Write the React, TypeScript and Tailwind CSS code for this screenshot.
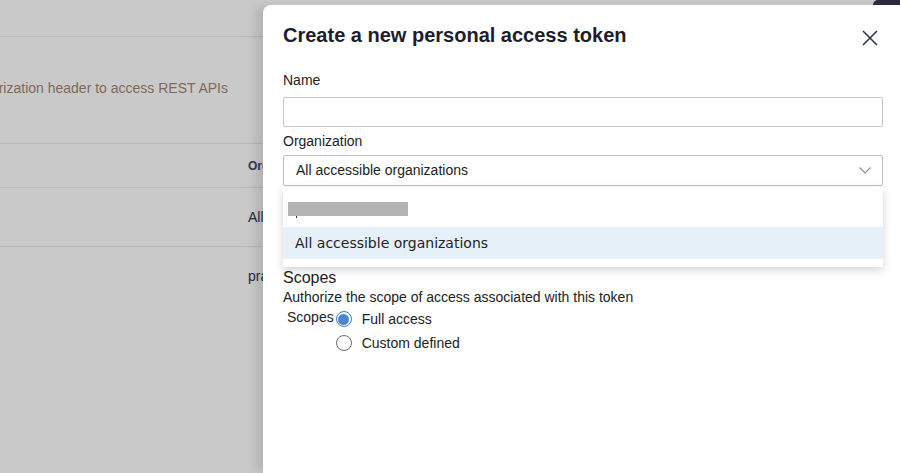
import React from "react";

function Radio({ checked }: { checked?: boolean }) {
  if (checked) {
    return (
      <span className="w-4 h-4 rounded-full border border-[#3d7dd0] bg-white flex items-center justify-center shrink-0">
        <span className="w-[11px] h-[11px] rounded-full bg-[#4a86d4]" />
      </span>
    );
  }
  return <span className="w-4 h-4 rounded-full border border-[#6b6b6b] bg-white shrink-0" />;
}

export default function App() {
  return (
    <div className="relative w-[900px] h-[473px] overflow-hidden bg-[#c9c9c9] flex font-['Liberation_Sans',Arial,sans-serif]">
      {/* page behind the overlay */}
      <div className="w-[263px] shrink-0 overflow-hidden">
        <div className="h-[37px] border-b border-[#b8b8b8]" />
        <div className="mt-[41px] w-[228px] flex justify-end overflow-hidden">
          <span className="whitespace-nowrap shrink-0 text-[14px] leading-5 text-[#80695a]">
            Use the token in the Authorization header to access REST APIs
          </span>
        </div>
        <div className="mt-[45px] border-t border-[#b8b8b8]">
          <div className="h-[44px] flex items-center pl-[248px] border-b border-[#b8b8b8]">
            <span className="whitespace-nowrap text-[12px] font-bold text-[#2b3a58]">Organization</span>
          </div>
          <div className="h-[59px] flex items-center pl-[248px] border-b border-[#b8b8b8]">
            <span className="whitespace-nowrap text-[14px] text-[#1f2940]">All accessible organizations</span>
          </div>
          <div className="h-[58px] flex items-center pl-[248px]">
            <span className="whitespace-nowrap text-[14px] text-[#1f2940]">practice</span>
          </div>
        </div>
      </div>

      {/* dark element at the top right, under the overlay */}
      <div className="absolute right-0 top-0 w-[27px] h-[5px] bg-[#2e2a3b] rounded-tl-[6px]" />

      {/* side panel */}
      <div className="flex-1 mt-[5px] bg-white rounded-tl-lg pt-[16px] pl-5 pr-[17px] shadow-[-10px_0_10px_-2px_rgba(0,0,0,0.1)]">
        <div className="flex items-start justify-between">
          <h1 className="text-[20px] leading-[28px] font-bold text-[#1d1d2b]">
            Create a new personal access token
          </h1>
          <button className="mt-[9px] mr-[5px] w-4 h-4 text-[#26334d]">
            <svg viewBox="0 0 16 16" width="16" height="16" fill="none" stroke="currentColor" strokeWidth="1.5">
              <path d="M1 1L15 15M15 1L1 15" />
            </svg>
          </button>
        </div>

        <label className="block mt-[21px] text-[14px] leading-5 text-[#222]">Name</label>
        <div className="mt-[7px] h-[30px] border border-[#c6c6c6] rounded-[2px]" />

        <label className="block mt-[4px] text-[14px] leading-5 text-[#222]">Organization</label>
        <div className="relative mt-[4px]">
          <div className="h-[31px] border border-[#c0c0c0] rounded-[2px] flex items-center justify-between pl-[12px] pr-[11px]">
            <span className="text-[14px] text-[#222]">All accessible organizations</span>
            <svg viewBox="0 0 12 7" width="12" height="7" fill="none" stroke="#8a8a8a" strokeWidth="1.1">
              <path d="M0.5 0.5L6 6L11.5 0.5" />
            </svg>
          </div>
          <div className="absolute left-0 right-0 top-full mt-px h-[80px] bg-white rounded-b-[2px] shadow-[0_3px_8px_rgba(0,0,0,0.18)] pt-[15px]">
            <div className="ml-[5px] w-[120px] h-[14px] bg-[#b4b4b4]" />
            <div className="ml-[13px] w-px h-[2px] bg-[#333]" />
            <div className="mt-[9px] h-[32px] bg-[#e6f0f9] flex items-center pl-[12px]">
              <span className="text-[14px] text-[#222] font-['DejaVu_Sans',sans-serif]">All accessible organizations</span>
            </div>
          </div>
        </div>

        <h2 className="mt-[83px] text-[16px] leading-[18px] text-[#222]">Scopes</h2>
        <p className="text-[14px] leading-5 text-[#222]">Authorize the scope of access associated with this token</p>
        <div className="flex items-start">
          <span className="ml-[4px] text-[14px] leading-5 text-[#222]">Scopes</span>
          <div className="ml-[2px] flex flex-col">
            <div className="h-6 flex items-center gap-[10px]">
              <Radio checked />
              <span className="text-[14px] text-[#222]">Full access</span>
            </div>
            <div className="h-6 flex items-center gap-[10px]">
              <Radio />
              <span className="text-[14px] text-[#222]">Custom defined</span>
            </div>
          </div>
        </div>
      </div>
    </div>
  );
}
